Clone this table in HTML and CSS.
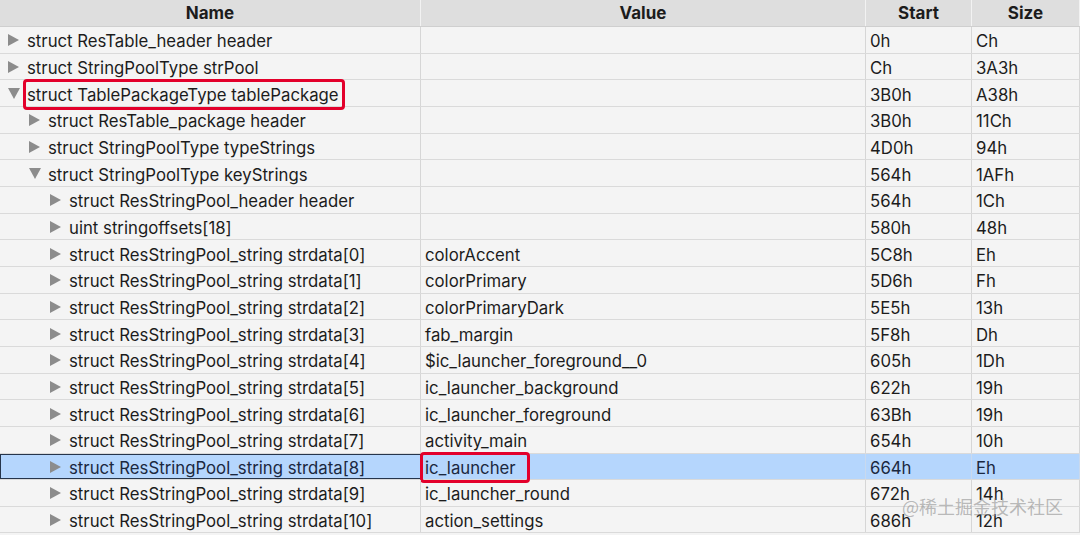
FILE: index.html
```html
<!DOCTYPE html>
<html>
<head>
<meta charset="utf-8">
<link rel="stylesheet" href="styles.css">
</head>
<body>
<div class="table">
  <div class="row head">
    <div class="cell">Name</div>
    <div class="cell">Value</div>
    <div class="cell">Start</div>
    <div class="cell">Size</div>
  </div>
  <div class="row"><div class="cell name l0"><span class="tri right"></span>struct ResTable_header header</div><div class="cell"></div><div class="cell">0h</div><div class="cell">Ch</div></div>
  <div class="row"><div class="cell name l0"><span class="tri right"></span>struct StringPoolType strPool</div><div class="cell"></div><div class="cell">Ch</div><div class="cell">3A3h</div></div>
  <div class="row"><div class="cell name l0"><span class="tri down"></span><span class="hl hl-a">struct TablePackageType tablePackage</span></div><div class="cell"></div><div class="cell">3B0h</div><div class="cell">A38h</div></div>
  <div class="row"><div class="cell name l1"><span class="tri right"></span>struct ResTable_package header</div><div class="cell"></div><div class="cell">3B0h</div><div class="cell">11Ch</div></div>
  <div class="row"><div class="cell name l1"><span class="tri right"></span>struct StringPoolType typeStrings</div><div class="cell"></div><div class="cell">4D0h</div><div class="cell">94h</div></div>
  <div class="row"><div class="cell name l1"><span class="tri down"></span>struct StringPoolType keyStrings</div><div class="cell"></div><div class="cell">564h</div><div class="cell">1AFh</div></div>
  <div class="row"><div class="cell name l2"><span class="tri right"></span>struct ResStringPool_header header</div><div class="cell"></div><div class="cell">564h</div><div class="cell">1Ch</div></div>
  <div class="row"><div class="cell name l2"><span class="tri right"></span>uint stringoffsets[18]</div><div class="cell"></div><div class="cell">580h</div><div class="cell">48h</div></div>
  <div class="row"><div class="cell name l2"><span class="tri right"></span>struct ResStringPool_string strdata[0]</div><div class="cell">colorAccent</div><div class="cell">5C8h</div><div class="cell">Eh</div></div>
  <div class="row"><div class="cell name l2"><span class="tri right"></span>struct ResStringPool_string strdata[1]</div><div class="cell">colorPrimary</div><div class="cell">5D6h</div><div class="cell">Fh</div></div>
  <div class="row"><div class="cell name l2"><span class="tri right"></span>struct ResStringPool_string strdata[2]</div><div class="cell">colorPrimaryDark</div><div class="cell">5E5h</div><div class="cell">13h</div></div>
  <div class="row"><div class="cell name l2"><span class="tri right"></span>struct ResStringPool_string strdata[3]</div><div class="cell">fab_margin</div><div class="cell">5F8h</div><div class="cell">Dh</div></div>
  <div class="row"><div class="cell name l2"><span class="tri right"></span>struct ResStringPool_string strdata[4]</div><div class="cell">$ic_launcher_foreground__0</div><div class="cell">605h</div><div class="cell">1Dh</div></div>
  <div class="row"><div class="cell name l2"><span class="tri right"></span>struct ResStringPool_string strdata[5]</div><div class="cell">ic_launcher_background</div><div class="cell">622h</div><div class="cell">19h</div></div>
  <div class="row"><div class="cell name l2"><span class="tri right"></span>struct ResStringPool_string strdata[6]</div><div class="cell">ic_launcher_foreground</div><div class="cell">63Bh</div><div class="cell">19h</div></div>
  <div class="row"><div class="cell name l2"><span class="tri right"></span>struct ResStringPool_string strdata[7]</div><div class="cell">activity_main</div><div class="cell">654h</div><div class="cell">10h</div></div>
  <div class="row sel"><div class="cell name l2 focus"><span class="tri right"></span>struct ResStringPool_string strdata[8]</div><div class="cell"><span class="hl hl-b">ic_launcher</span></div><div class="cell">664h</div><div class="cell">Eh</div></div>
  <div class="row"><div class="cell name l2"><span class="tri right"></span>struct ResStringPool_string strdata[9]</div><div class="cell">ic_launcher_round</div><div class="cell">672h</div><div class="cell">14h</div></div>
  <div class="row"><div class="cell name l2"><span class="tri right"></span>struct ResStringPool_string strdata[10]</div><div class="cell">action_settings</div><div class="cell">686h</div><div class="cell">12h</div></div>
  <div class="watermark">@稀土掘金技术社区</div>
</div>
</body>
</html>
```

FILE: styles.css
```css
* { box-sizing: border-box; }
html, body {
  margin: 0;
  padding: 0;
  background: #f4f4f4;
  overflow: hidden;
}
body {
  font-family: "Inter", "Liberation Sans", Arial, sans-serif;
  font-size: 16.75px;
  color: #1c1c1c;
}
.table {
  position: relative;
  width: 1080px;
  height: 535px;
  background: #f4f4f4;
}
.row {
  display: grid;
  grid-template-columns: 421px 445px 106px 108px;
  height: 26.67px;
  border-bottom: 1px solid #dadada;
}
.cell {
  display: flex;
  align-items: center;
  padding-left: 4px;
  padding-top: 3px;
  border-right: 1px solid #d6d6d6;
  white-space: nowrap;
  position: relative;
}
.head {
  height: 27px;
  background: #dedede;
  border-bottom: 1px solid #cfcfcf;
}
.head .cell {
  justify-content: center;
  padding-left: 0;
  padding-top: 0;
  font-weight: bold;
  font-size: 17px;
  border-right: 1px solid #f2f2f2;
}
.name { padding-left: 0; }
.l0 { padding-left: 8px; }
.l1 { padding-left: 29px; }
.l2 { padding-left: 50px; }
.tri {
  display: inline-block;
  width: 0;
  height: 0;
  margin-right: 8px;
  flex: none;
  position: relative;
  top: -1px;
}
.tri.right {
  border-top: 6px solid transparent;
  border-bottom: 6px solid transparent;
  border-left: 11px solid #8c8c8c;
}
.tri.down {
  border-left: 6px solid transparent;
  border-right: 6px solid transparent;
  border-top: 11px solid #8c8c8c;
  margin-right: 7px;
}
.sel { background: #b5d6fd; color: #1b2840; }
.sel .cell { border-right-color: #c9d9ee; }
.focus {
  outline: 1.5px solid #26354b;
  outline-offset: -1.5px;
}
.hl { position: relative; }
.hl::after {
  content: "";
  position: absolute;
  border: 3px solid #e3002b;
  border-radius: 4px;
  top: -6px;
  bottom: -5px;
}
.hl-a::after { left: -4px; right: -6px; }
.hl-b::after { left: -5px; right: -14px; }
.watermark {
  position: absolute;
  right: 17px;
  bottom: 16px;
  font-family: "Noto Sans CJK SC", sans-serif;
  font-size: 18px;
  color: rgba(150, 150, 150, 0.65);
  pointer-events: none;
}
```
